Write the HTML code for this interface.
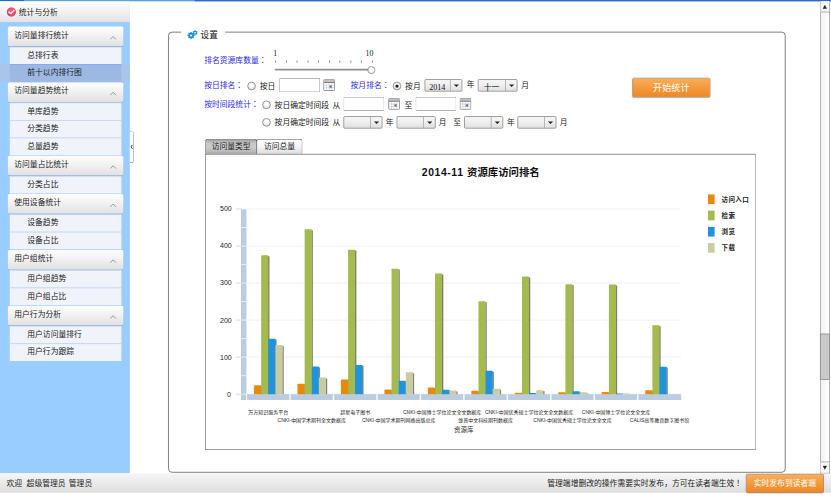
<!DOCTYPE html>
<html lang="zh-CN"><head><meta charset="utf-8"><title>统计与分析</title>
<style>
html,body{margin:0;padding:0;background:#fff;}
body{width:831px;height:503px;overflow:hidden;position:relative;}
#root{position:absolute;left:0;top:0;width:1280px;height:775px;transform:scale(0.649219);transform-origin:0 0;
 font-family:"Liberation Sans","Noto Sans CJK SC",sans-serif;font-size:12px;color:#222;overflow:hidden;background:#fff;}
#root div,#root span{position:absolute;box-sizing:border-box;white-space:nowrap;}
.t{line-height:16px;height:16px;}
.bl{color:#2a2ae0;}
.gh{left:12px;width:178px;height:30px;border-radius:3px;background:linear-gradient(#fefefe,#f2f2f2 45%,#e1e1e1);box-shadow:0 1px 1px rgba(40,50,70,.22);}
.gh .t{left:10px;top:4.5px;}
.gh svg{position:absolute;left:157px;top:13px;}
.it{left:15px;width:172px;height:27px;background:#f1f3fb;border-top:1px solid #bcd0f0;}
.it .t{left:27px;top:4px;}
.inp{height:22px;width:63px;background:#fff;border:1.2px solid #9a9a9a;border-top-color:#757575;border-left-color:#8a8a8a;border-radius:2px;}
.sel{height:19px;border:1.2px solid #6c6c6c;border-radius:2px;background:linear-gradient(#f7f7f7,#eeeeee 50%,#dfdfdf);}
.sel i{position:absolute;right:17px;top:0;width:1px;height:17px;background:#9a9a9a;}
.sel b{position:absolute;right:4px;top:7px;width:0;height:0;border-left:4px solid transparent;border-right:4px solid transparent;border-top:4.5px solid #222;}
.sel span{left:6px;top:3px;line-height:16px;font-family:"Liberation Serif","Noto Serif CJK SC",serif;font-size:12.5px;color:#111;}
.rad{width:13px;height:13px;border-radius:50%;border:1.2px solid #666;background:radial-gradient(circle at 50% 35%,#ffffff 20%,#d2d2d2);}
.rad.on:after{content:"";position:absolute;left:3px;top:3px;width:5px;height:5px;border-radius:50%;background:#222;}
.cal{width:18px;height:18px;}
.sel span.sans{font-family:"Liberation Sans","Noto Sans CJK SC",sans-serif;font-size:12px;top:3.5px;}
#root .jp{position:static;font-family:'Liberation Sans','Noto Sans CJK JP',sans-serif;}
.btn{border:1.3px solid #a8621f;border-radius:2px;background:linear-gradient(#f9ae5c,#f39a3c 50%,#ee8724);color:#fff;text-align:center;box-shadow:0 1px 1px rgba(0,0,0,.25);}
</style></head>
<body><div id="root">
<div style="left:0;top:0;width:1280px;height:2px;background:#5a9fe2"></div>
<div style="left:0;top:0;width:37px;height:2px;background:#1f6fc4"></div>
<div style="left:300px;top:0;width:980px;height:2px;background:#3068c4"></div>
<div style="left:0;top:2px;width:200px;height:727px;background:#99ccff"></div>
<div style="left:0;top:2px;width:200px;height:31.5px;background:linear-gradient(#ffffff,#f4f4f4 40%,#e3e3e3)"></div>
<svg style="position:absolute;left:10px;top:11px" width="15" height="15" viewBox="0 0 15 15"><circle cx="7.5" cy="7.5" r="7.2" fill="#e2496f"/><circle cx="7.5" cy="6" r="5" fill="#ea6d8a" opacity=".5"/><path d="M3.8 7.4 L6.6 10 L11.4 5" fill="none" stroke="#fff" stroke-width="2" stroke-linecap="round" stroke-linejoin="round"/></svg>
<div class="t" style="left:29px;top:11px;color:#222">统计与分析</div>
<div class="it" style="top:72px"><div class="t">总排行表</div></div>
<div style="left:0;top:99px;width:200px;height:27px;background:#a9c5ec"></div>
<div class="it" style="top:99px;background:#9db9e3;border-top-color:#7fa3dd"><div class="t">前十以内排行图</div></div>
<div class="gh" style="top:41px"><div class="t">访问量排行统计</div><svg width="12" height="8" viewBox="0 0 12 8"><path d="M1 6.6 L5.3 2.2 L9.6 6.6" fill="none" stroke="#8e8e8e" stroke-width="1.4"/></svg></div>
<div class="it" style="top:158px"><div class="t">单库趋势</div></div>
<div class="it" style="top:185px"><div class="t">分类趋势</div></div>
<div class="it" style="top:212px"><div class="t">总量趋势</div></div>
<div class="gh" style="top:127px"><div class="t">访问量趋势统计</div><svg width="12" height="8" viewBox="0 0 12 8"><path d="M1 6.6 L5.3 2.2 L9.6 6.6" fill="none" stroke="#8e8e8e" stroke-width="1.4"/></svg></div>
<div class="it" style="top:271px"><div class="t">分类占比</div></div>
<div class="gh" style="top:240px"><div class="t">访问量占比统计</div><svg width="12" height="8" viewBox="0 0 12 8"><path d="M1 6.6 L5.3 2.2 L9.6 6.6" fill="none" stroke="#8e8e8e" stroke-width="1.4"/></svg></div>
<div class="it" style="top:330px"><div class="t">设备趋势</div></div>
<div class="it" style="top:357px"><div class="t">设备占比</div></div>
<div class="gh" style="top:299px"><div class="t">使用设备统计</div><svg width="12" height="8" viewBox="0 0 12 8"><path d="M1 6.6 L5.3 2.2 L9.6 6.6" fill="none" stroke="#8e8e8e" stroke-width="1.4"/></svg></div>
<div class="it" style="top:416px"><div class="t">用户组趋势</div></div>
<div class="it" style="top:443px"><div class="t">用户组占比</div></div>
<div class="gh" style="top:385px"><div class="t">用户组统计</div><svg width="12" height="8" viewBox="0 0 12 8"><path d="M1 6.6 L5.3 2.2 L9.6 6.6" fill="none" stroke="#8e8e8e" stroke-width="1.4"/></svg></div>
<div class="it" style="top:502px"><div class="t">用户访问量排行</div></div>
<div class="it" style="top:529px"><div class="t">用户行为跟踪</div></div>
<div class="gh" style="top:471px"><div class="t">用户行为分析</div><svg width="12" height="8" viewBox="0 0 12 8"><path d="M1 6.6 L5.3 2.2 L9.6 6.6" fill="none" stroke="#8e8e8e" stroke-width="1.4"/></svg></div>
<div style="left:200px;top:202px;width:6px;height:49px;background:#fff;border:1.2px solid #858585;border-left:none;border-radius:0 3px 3px 0"></div>
<svg style="position:absolute;left:201px;top:222px" width="4" height="8" viewBox="0 0 4 8"><path d="M3.2 1 L0.8 4 L3.2 7" fill="none" stroke="#111" stroke-width="1.4"/></svg>
<div style="left:0;top:729px;width:1280px;height:30px;background:linear-gradient(#f6f6f6,#ececec 45%,#dedede)"></div>
<div class="t" style="left:10px;top:736px">欢迎</div>
<div class="t" style="left:41px;top:736px">超级管理员</div>
<div class="t" style="left:106px;top:736px">管理员</div>
<div class="t" style="left:843px;top:736px">管理端增删改的操作需要实时发布，方可在读者端生效<span class="jp" lang="ja">！</span></div>
<div class="btn" style="left:1149px;top:730px;width:120px;height:29px;line-height:27px;font-size:12px">实时发布到读者端</div>
<div style="left:1263px;top:2px;width:15px;height:727px;background:linear-gradient(90deg,#f2f2f2,#ffffff);border:1px solid #8c8c8c;border-top:none"></div>
<div style="left:1264px;top:2px;width:13px;height:17px;background:#f7f7f7;border-bottom:1px solid #8c8c8c"></div>
<svg style="position:absolute;left:1267px;top:7px" width="7" height="7" viewBox="0 0 7 7"><path d="M3.5 0.5 L6.8 6.5 L0.2 6.5 Z" fill="#222"/></svg>
<div style="left:1264px;top:711px;width:13px;height:17px;background:#f7f7f7;border-top:1px solid #8c8c8c"></div>
<svg style="position:absolute;left:1267px;top:717px" width="7" height="7" viewBox="0 0 7 7"><path d="M3.5 6.5 L6.8 0.5 L0.2 0.5 Z" fill="#222"/></svg>
<div style="left:1263px;top:514px;width:15px;height:71px;background:#c9c9c9;border:1px solid #7d7d7d"></div>
<div style="left:259px;top:49px;width:951px;height:679px;border:1.3px solid #3a3a3a;border-radius:6px"></div>
<div style="left:279px;top:44px;width:68px;height:12px;background:#fff"></div>
<svg style="position:absolute;left:288px;top:46px" width="17" height="15" viewBox="0 0 17 15">
<g fill="#1e90d8"><circle cx="6.3" cy="8.6" r="4"/>
<g transform="translate(6.3 8.6)"><rect x="-1.1" y="-5.4" width="2.2" height="10.8"/><rect x="-1.1" y="-5.4" width="2.2" height="10.8" transform="rotate(45)"/><rect x="-1.1" y="-5.4" width="2.2" height="10.8" transform="rotate(90)"/><rect x="-1.1" y="-5.4" width="2.2" height="10.8" transform="rotate(135)"/></g>
<circle cx="12.6" cy="4.4" r="2.9"/>
<g transform="translate(12.6 4.4)"><rect x="-0.9" y="-3.9" width="1.8" height="7.8"/><rect x="-0.9" y="-3.9" width="1.8" height="7.8" transform="rotate(60)"/><rect x="-0.9" y="-3.9" width="1.8" height="7.8" transform="rotate(120)"/></g></g>
<circle cx="6.3" cy="8.6" r="1.5" fill="#fff"/><circle cx="12.6" cy="4.4" r="1.3" fill="#fff"/></svg>
<div class="t" style="left:309px;top:45.5px;font-size:13.3px;color:#111;font-family:'Liberation Serif','Noto Sans CJK SC',sans-serif">设置</div>
<div class="t bl" style="left:314.5px;top:85px">排名资源库数量<span class="jp" lang="ja">：</span></div>
<div class="t" style="left:421px;top:74.5px;font-family:'Liberation Serif',serif;color:#111">1</div>
<div class="t" style="left:563px;top:74.5px;font-family:'Liberation Serif',serif;color:#111">10</div>
<div style="left:424.00px;top:92.5px;width:1px;height:4.5px;background:#666"></div>
<div style="left:440.56px;top:92.5px;width:1px;height:4.5px;background:#666"></div>
<div style="left:457.12px;top:92.5px;width:1px;height:4.5px;background:#666"></div>
<div style="left:473.68px;top:92.5px;width:1px;height:4.5px;background:#666"></div>
<div style="left:490.24px;top:92.5px;width:1px;height:4.5px;background:#666"></div>
<div style="left:506.80px;top:92.5px;width:1px;height:4.5px;background:#666"></div>
<div style="left:523.36px;top:92.5px;width:1px;height:4.5px;background:#666"></div>
<div style="left:539.92px;top:92.5px;width:1px;height:4.5px;background:#666"></div>
<div style="left:556.48px;top:92.5px;width:1px;height:4.5px;background:#666"></div>
<div style="left:573.04px;top:92.5px;width:1px;height:4.5px;background:#666"></div>
<div style="left:423px;top:106px;width:146px;height:3px;background:#8d8d8d;border-radius:1.5px;border-bottom:1px solid #c8c8c8"></div>
<div style="left:566px;top:102px;width:12px;height:12px;border-radius:50%;background:radial-gradient(circle at 50% 35%,#fff 35%,#e2e2e2);border:1px solid #6f6f6f"></div>
<div class="t bl" style="left:314.5px;top:123px">按日排名<span class="jp" lang="ja">：</span></div>
<div class="rad" style="left:381px;top:125.7px"></div>
<div class="t" style="left:400px;top:124.5px">按日</div>
<div class="inp" style="left:430px;top:120px"></div>
<svg class="cal" style="position:absolute;left:498px;top:122px" width="18" height="18" viewBox="0 0 18 18"><rect x="0.5" y="0.5" width="17" height="17" rx="1.5" fill="#fff" stroke="#6a6a6a" stroke-width="1.2"/><rect x="1" y="1" width="16" height="4" fill="#c2c2c2"/><rect x="1" y="4.3" width="16" height="1.2" fill="#5e5e5e"/><path d="M5 5.5V17M9 5.5V17M13 5.5V17M1 9.3H17M1 13.2H17" stroke="#cdcdcd" stroke-width="1" fill="none"/><rect x="9.5" y="9.6" width="3.6" height="3.6" fill="#4b7ab8"/></svg>
<div class="t bl" style="left:540px;top:123px">按月排名<span class="jp" lang="ja">：</span></div>
<div class="rad on" style="left:605px;top:125.7px"></div>
<div class="t" style="left:624px;top:124.5px">按月</div>
<div class="sel" style="left:654px;top:122px;width:58px"><span>2014</span><i></i><b></b></div>
<div class="t" style="left:719px;top:122px">年</div>
<div class="sel" style="left:736px;top:122px;width:61px"><span class="sans" style="left:8px">十一</span><i></i><b></b></div>
<div class="t" style="left:803px;top:123px">月</div>
<div class="btn" style="left:974px;top:120px;width:120px;height:30px;line-height:28px;font-size:14px">开始统计</div>
<div class="t bl" style="left:314.5px;top:152.7px">按时间段统计<span class="jp" lang="ja">：</span></div>
<div class="rad" style="left:404px;top:154.5px"></div>
<div class="t" style="left:423px;top:153.5px">按日确定时间段</div>
<div class="t" style="left:512px;top:153.5px">从</div>
<div class="inp" style="left:529px;top:149px"></div>
<svg class="cal" style="position:absolute;left:598px;top:151px" width="18" height="18" viewBox="0 0 18 18"><rect x="0.5" y="0.5" width="17" height="17" rx="1.5" fill="#fff" stroke="#6a6a6a" stroke-width="1.2"/><rect x="1" y="1" width="16" height="4" fill="#c2c2c2"/><rect x="1" y="4.3" width="16" height="1.2" fill="#5e5e5e"/><path d="M5 5.5V17M9 5.5V17M13 5.5V17M1 9.3H17M1 13.2H17" stroke="#cdcdcd" stroke-width="1" fill="none"/><rect x="9.5" y="9.6" width="3.6" height="3.6" fill="#4b7ab8"/></svg>
<div class="t" style="left:623px;top:153.5px">至</div>
<div class="inp" style="left:640px;top:149px"></div>
<svg class="cal" style="position:absolute;left:708px;top:151px" width="18" height="18" viewBox="0 0 18 18"><rect x="0.5" y="0.5" width="17" height="17" rx="1.5" fill="#fff" stroke="#6a6a6a" stroke-width="1.2"/><rect x="1" y="1" width="16" height="4" fill="#c2c2c2"/><rect x="1" y="4.3" width="16" height="1.2" fill="#5e5e5e"/><path d="M5 5.5V17M9 5.5V17M13 5.5V17M1 9.3H17M1 13.2H17" stroke="#cdcdcd" stroke-width="1" fill="none"/><rect x="9.5" y="9.6" width="3.6" height="3.6" fill="#4b7ab8"/></svg>
<div class="rad" style="left:404px;top:182px"></div>
<div class="t" style="left:423px;top:180.5px">按月确定时间段</div>
<div class="t" style="left:512px;top:180.5px">从</div>
<div class="sel" style="left:529px;top:179px;width:60px"><i></i><b></b></div>
<div class="t" style="left:594px;top:180.5px">年</div>
<div class="sel" style="left:611px;top:179px;width:60px"><i></i><b></b></div>
<div class="t" style="left:676px;top:180.5px">月</div>
<div class="t" style="left:698px;top:180.5px">至</div>
<div class="sel" style="left:715px;top:179px;width:60px"><i></i><b></b></div>
<div class="t" style="left:781px;top:180.5px">年</div>
<div class="sel" style="left:797px;top:179px;width:60px"><i></i><b></b></div>
<div class="t" style="left:862px;top:180.5px">月</div>
<div style="left:316px;top:214px;width:79.5px;height:24px;border:1.5px solid #484848;border-bottom:none;border-radius:4px 4px 0 0;background:linear-gradient(#9e9e9e,#c6c6c6 22%,#cbcbcb 50%,#b9b9b9 80%,#a6a6a6)"><div class="t" style="left:9px;top:3px;color:#222">访问量类型</div></div>
<div style="left:394.5px;top:214px;width:71.5px;height:24px;border:1.5px solid #555;border-bottom:none;border-radius:4px 4px 0 0;background:linear-gradient(#ffffff,#f4f4f4 50%,#dadada)"><div class="t" style="left:11px;top:3px;color:#222">访问总量</div></div>
<div style="left:316px;top:237px;width:848px;height:456px;border:1.2px solid #666;border-top:1.3px solid #5c5c5c;border-right-color:#959595;background:#fff"></div>
<svg style="position:absolute;left:0;top:0" width="1280" height="775" viewBox="0 0 1280 775" font-family="'Liberation Sans','Noto Sans CJK SC',sans-serif">
<defs><linearGradient id="sh" x1="0" x2="1" y1="0" y2="0"><stop offset="0" stop-color="#000" stop-opacity=".7"/><stop offset="0.45" stop-color="#000" stop-opacity=".45"/><stop offset="1" stop-color="#000" stop-opacity="0"/></linearGradient></defs>
<text x="740.5" y="271.5" text-anchor="middle" font-size="16" font-weight="bold" fill="#111"><tspan letter-spacing="0.95">2014-11 </tspan>资源库访问排名</text>
<line x1="379.8" x2="1049.3" y1="607.20" y2="607.20" stroke="#ececee" stroke-width="1.1"/>
<line x1="363.5" x2="372" y1="607.20" y2="607.20" stroke="#c4d2e2" stroke-width="1.2"/>
<text x="355.5" y="610.90" text-anchor="end" font-size="10.8" fill="#1c1c1c">0</text>
<line x1="379.8" x2="1049.3" y1="550.14" y2="550.14" stroke="#ececee" stroke-width="1.1"/>
<line x1="363.5" x2="372" y1="550.14" y2="550.14" stroke="#c4d2e2" stroke-width="1.2"/>
<text x="357.0" y="553.84" text-anchor="end" font-size="10.8" fill="#1c1c1c">100</text>
<line x1="379.8" x2="1049.3" y1="493.08" y2="493.08" stroke="#ececee" stroke-width="1.1"/>
<line x1="363.5" x2="372" y1="493.08" y2="493.08" stroke="#c4d2e2" stroke-width="1.2"/>
<text x="357.0" y="496.78" text-anchor="end" font-size="10.8" fill="#1c1c1c">200</text>
<line x1="379.8" x2="1049.3" y1="436.02" y2="436.02" stroke="#ececee" stroke-width="1.1"/>
<line x1="363.5" x2="372" y1="436.02" y2="436.02" stroke="#c4d2e2" stroke-width="1.2"/>
<text x="357.0" y="439.72" text-anchor="end" font-size="10.8" fill="#1c1c1c">300</text>
<line x1="379.8" x2="1049.3" y1="378.96" y2="378.96" stroke="#ececee" stroke-width="1.1"/>
<line x1="363.5" x2="372" y1="378.96" y2="378.96" stroke="#c4d2e2" stroke-width="1.2"/>
<text x="357.0" y="382.66" text-anchor="end" font-size="10.8" fill="#1c1c1c">400</text>
<line x1="379.8" x2="1049.3" y1="321.90" y2="321.90" stroke="#ececee" stroke-width="1.1"/>
<line x1="363.5" x2="372" y1="321.90" y2="321.90" stroke="#c4d2e2" stroke-width="1.2"/>
<text x="357.0" y="325.60" text-anchor="end" font-size="10.8" fill="#1c1c1c">500</text>
<rect x="371.2" y="321.90" width="8.4" height="294.30" fill="#b9cce0"/>
<line x1="371.2" x2="379.6" y1="607.20" y2="607.20" stroke="#eaf0f7" stroke-width="1.5"/>
<line x1="371.2" x2="379.6" y1="578.67" y2="578.67" stroke="#eaf0f7" stroke-width="1.5"/>
<line x1="371.2" x2="379.6" y1="550.14" y2="550.14" stroke="#eaf0f7" stroke-width="1.5"/>
<line x1="371.2" x2="379.6" y1="521.61" y2="521.61" stroke="#eaf0f7" stroke-width="1.5"/>
<line x1="371.2" x2="379.6" y1="493.08" y2="493.08" stroke="#eaf0f7" stroke-width="1.5"/>
<line x1="371.2" x2="379.6" y1="464.55" y2="464.55" stroke="#eaf0f7" stroke-width="1.5"/>
<line x1="371.2" x2="379.6" y1="436.02" y2="436.02" stroke="#eaf0f7" stroke-width="1.5"/>
<line x1="371.2" x2="379.6" y1="407.49" y2="407.49" stroke="#eaf0f7" stroke-width="1.5"/>
<line x1="371.2" x2="379.6" y1="378.96" y2="378.96" stroke="#eaf0f7" stroke-width="1.5"/>
<line x1="371.2" x2="379.6" y1="350.43" y2="350.43" stroke="#eaf0f7" stroke-width="1.5"/>
<line x1="371.2" x2="379.6" y1="321.90" y2="321.90" stroke="#eaf0f7" stroke-width="1.5"/>
<rect x="379.80" y="607.20" width="669.50" height="9" fill="#b9cce0"/>
<rect x="445.55" y="607.20" width="2.4" height="9" fill="#f3f6fa"/>
<rect x="512.50" y="607.20" width="2.4" height="9" fill="#f3f6fa"/>
<rect x="579.45" y="607.20" width="2.4" height="9" fill="#f3f6fa"/>
<rect x="646.40" y="607.20" width="2.4" height="9" fill="#f3f6fa"/>
<rect x="713.35" y="607.20" width="2.4" height="9" fill="#f3f6fa"/>
<rect x="780.30" y="607.20" width="2.4" height="9" fill="#f3f6fa"/>
<rect x="847.25" y="607.20" width="2.4" height="9" fill="#f3f6fa"/>
<rect x="914.20" y="607.20" width="2.4" height="9" fill="#f3f6fa"/>
<rect x="981.15" y="607.20" width="2.4" height="9" fill="#f3f6fa"/>
<rect x="379.3" y="607.10" width="1.3" height="9.2" fill="#fff"/>
<rect x="401.98" y="595.01" width="3" height="12.19" fill="url(#sh)"/>
<rect x="412.98" y="394.73" width="3" height="212.47" fill="url(#sh)"/>
<rect x="423.98" y="523.11" width="3" height="84.09" fill="url(#sh)"/>
<rect x="434.98" y="532.81" width="3" height="74.39" fill="url(#sh)"/>
<rect x="391.28" y="593.51" width="11.00" height="13.69" rx="0.8" fill="#e8890c"/>
<rect x="402.28" y="393.23" width="11.00" height="213.97" rx="0.8" fill="#a3ba4e"/>
<rect x="413.28" y="521.61" width="11.00" height="85.59" rx="0.8" fill="#1f93dc"/>
<rect x="424.28" y="531.31" width="11.00" height="75.89" rx="0.8" fill="#cbcba0"/>
<rect x="468.93" y="592.72" width="3" height="14.48" fill="url(#sh)"/>
<rect x="479.93" y="354.78" width="3" height="252.42" fill="url(#sh)"/>
<rect x="490.93" y="565.91" width="3" height="41.30" fill="url(#sh)"/>
<rect x="501.93" y="583.02" width="3" height="24.18" fill="url(#sh)"/>
<rect x="458.23" y="591.22" width="11.00" height="15.98" rx="0.8" fill="#e8890c"/>
<rect x="469.23" y="353.28" width="11.00" height="253.92" rx="0.8" fill="#a3ba4e"/>
<rect x="480.23" y="564.41" width="11.00" height="42.80" rx="0.8" fill="#1f93dc"/>
<rect x="491.23" y="581.52" width="11.00" height="25.68" rx="0.8" fill="#cbcba0"/>
<rect x="535.88" y="585.88" width="3" height="21.32" fill="url(#sh)"/>
<rect x="546.88" y="386.17" width="3" height="221.03" fill="url(#sh)"/>
<rect x="557.88" y="563.62" width="3" height="43.58" fill="url(#sh)"/>
<rect x="525.18" y="584.38" width="11.00" height="22.82" rx="0.8" fill="#e8890c"/>
<rect x="536.18" y="384.67" width="11.00" height="222.53" rx="0.8" fill="#a3ba4e"/>
<rect x="547.18" y="562.12" width="11.00" height="45.08" rx="0.8" fill="#1f93dc"/>
<rect x="602.83" y="601.28" width="3" height="5.92" fill="url(#sh)"/>
<rect x="613.83" y="415.27" width="3" height="191.93" fill="url(#sh)"/>
<rect x="624.83" y="588.16" width="3" height="19.04" fill="url(#sh)"/>
<rect x="635.83" y="575.03" width="3" height="32.17" fill="url(#sh)"/>
<rect x="592.13" y="599.78" width="11.00" height="7.42" rx="0.8" fill="#e8890c"/>
<rect x="603.13" y="413.77" width="11.00" height="193.43" rx="0.8" fill="#a3ba4e"/>
<rect x="614.13" y="586.66" width="11.00" height="20.54" rx="0.8" fill="#1f93dc"/>
<rect x="625.13" y="573.53" width="11.00" height="33.67" rx="0.8" fill="#cbcba0"/>
<rect x="669.78" y="598.43" width="3" height="8.77" fill="url(#sh)"/>
<rect x="680.78" y="422.68" width="3" height="184.52" fill="url(#sh)"/>
<rect x="691.78" y="601.85" width="3" height="5.35" fill="url(#sh)"/>
<rect x="702.78" y="602.99" width="3" height="4.21" fill="url(#sh)"/>
<rect x="659.08" y="596.93" width="11.00" height="10.27" rx="0.8" fill="#e8890c"/>
<rect x="670.08" y="421.18" width="11.00" height="186.02" rx="0.8" fill="#a3ba4e"/>
<rect x="681.08" y="600.35" width="11.00" height="6.85" rx="0.8" fill="#1f93dc"/>
<rect x="692.08" y="601.49" width="11.00" height="5.71" rx="0.8" fill="#cbcba0"/>
<rect x="736.73" y="603.56" width="3" height="3.64" fill="url(#sh)"/>
<rect x="747.73" y="465.48" width="3" height="141.72" fill="url(#sh)"/>
<rect x="758.73" y="572.75" width="3" height="34.45" fill="url(#sh)"/>
<rect x="769.73" y="600.14" width="3" height="7.06" fill="url(#sh)"/>
<rect x="726.02" y="602.06" width="11.00" height="5.14" rx="0.8" fill="#e8890c"/>
<rect x="737.02" y="463.98" width="11.00" height="143.22" rx="0.8" fill="#a3ba4e"/>
<rect x="748.02" y="571.25" width="11.00" height="35.95" rx="0.8" fill="#1f93dc"/>
<rect x="759.02" y="598.64" width="11.00" height="8.56" rx="0.8" fill="#cbcba0"/>
<rect x="803.68" y="606.42" width="3" height="0.78" fill="url(#sh)"/>
<rect x="814.68" y="427.25" width="3" height="179.95" fill="url(#sh)"/>
<rect x="825.68" y="606.99" width="3" height="0.21" fill="url(#sh)"/>
<rect x="836.68" y="602.42" width="3" height="4.78" fill="url(#sh)"/>
<rect x="792.98" y="604.92" width="11.00" height="2.28" rx="0.8" fill="#e8890c"/>
<rect x="803.98" y="425.75" width="11.00" height="181.45" rx="0.8" fill="#a3ba4e"/>
<rect x="814.98" y="605.49" width="11.00" height="1.71" rx="0.8" fill="#1f93dc"/>
<rect x="825.98" y="600.92" width="11.00" height="6.28" rx="0.8" fill="#cbcba0"/>
<rect x="870.63" y="605.85" width="3" height="1.35" fill="url(#sh)"/>
<rect x="881.63" y="439.23" width="3" height="167.97" fill="url(#sh)"/>
<rect x="892.63" y="604.14" width="3" height="3.06" fill="url(#sh)"/>
<rect x="903.63" y="605.85" width="3" height="1.35" fill="url(#sh)"/>
<rect x="859.93" y="604.35" width="11.00" height="2.85" rx="0.8" fill="#e8890c"/>
<rect x="870.93" y="437.73" width="11.00" height="169.47" rx="0.8" fill="#a3ba4e"/>
<rect x="881.93" y="602.64" width="11.00" height="4.56" rx="0.8" fill="#1f93dc"/>
<rect x="892.93" y="604.35" width="11.00" height="2.85" rx="0.8" fill="#cbcba0"/>
<rect x="937.58" y="605.28" width="3" height="1.92" fill="url(#sh)"/>
<rect x="948.58" y="439.80" width="3" height="167.40" fill="url(#sh)"/>
<rect x="959.58" y="607.56" width="3" height="-0.36" fill="url(#sh)"/>
<rect x="970.58" y="607.56" width="3" height="-0.36" fill="url(#sh)"/>
<rect x="926.88" y="603.78" width="11.00" height="3.42" rx="0.8" fill="#e8890c"/>
<rect x="937.88" y="438.30" width="11.00" height="168.90" rx="0.8" fill="#a3ba4e"/>
<rect x="948.88" y="606.06" width="11.00" height="1.14" rx="0.8" fill="#1f93dc"/>
<rect x="959.88" y="606.06" width="11.00" height="1.14" rx="0.8" fill="#cbcba0"/>
<rect x="1004.53" y="602.42" width="3" height="4.78" fill="url(#sh)"/>
<rect x="1015.53" y="502.57" width="3" height="104.63" fill="url(#sh)"/>
<rect x="1026.53" y="566.48" width="3" height="40.72" fill="url(#sh)"/>
<rect x="993.83" y="600.92" width="11.00" height="6.28" rx="0.8" fill="#e8890c"/>
<rect x="1004.83" y="501.07" width="11.00" height="106.13" rx="0.8" fill="#a3ba4e"/>
<rect x="1015.83" y="564.98" width="11.00" height="42.22" rx="0.8" fill="#1f93dc"/>
<text x="413.28" y="637.20" text-anchor="middle" font-size="7.7" fill="#1c1c1c">万方知识服务平台</text>
<text x="480.23" y="650.10" text-anchor="middle" font-size="7.7" fill="#1c1c1c">CNKI-中国学术期刊全文数据库</text>
<text x="547.18" y="637.20" text-anchor="middle" font-size="7.7" fill="#1c1c1c">超星电子图书</text>
<text x="614.13" y="650.10" text-anchor="middle" font-size="7.7" fill="#1c1c1c">CNKI-中国学术期刊网络出版总库</text>
<text x="681.08" y="637.20" text-anchor="middle" font-size="7.7" fill="#1c1c1c">CNKI-中国博士学位论文全文数据库</text>
<text x="748.02" y="650.10" text-anchor="middle" font-size="7.7" fill="#1c1c1c">维普中文科技期刊数据库</text>
<text x="814.98" y="637.20" text-anchor="middle" font-size="7.7" fill="#1c1c1c">CNKI-中国优秀硕士学位论文全文数据库</text>
<text x="881.93" y="650.10" text-anchor="middle" font-size="7.7" fill="#1c1c1c">CNKI-中国优秀硕士学位论文全文库</text>
<text x="948.88" y="637.20" text-anchor="middle" font-size="7.7" fill="#1c1c1c">CNKI-中国博士学位论文全文库</text>
<text x="1015.83" y="650.10" text-anchor="middle" font-size="7.7" fill="#1c1c1c">CALIS高等教育数字图书馆</text>
<text x="714.5" y="665.5" text-anchor="middle" font-size="10" fill="#333">资源库</text>
<rect x="1090.5" y="299.40" width="10.2" height="15" fill="#e8890c"/>
<text x="1111.5" y="310.40" font-size="10" font-weight="bold" fill="#222" letter-spacing="0.6">访问入口</text>
<rect x="1090.5" y="324.40" width="10.2" height="15" fill="#a3ba4e"/>
<text x="1111.5" y="335.40" font-size="10" font-weight="bold" fill="#222" letter-spacing="0.6">检索</text>
<rect x="1090.5" y="349.40" width="10.2" height="15" fill="#1f93dc"/>
<text x="1111.5" y="360.40" font-size="10" font-weight="bold" fill="#222" letter-spacing="0.6">浏览</text>
<rect x="1090.5" y="374.40" width="10.2" height="15" fill="#cbcba0"/>
<text x="1111.5" y="385.40" font-size="10" font-weight="bold" fill="#222" letter-spacing="0.6">下载</text>
</svg>
</div></body></html>
